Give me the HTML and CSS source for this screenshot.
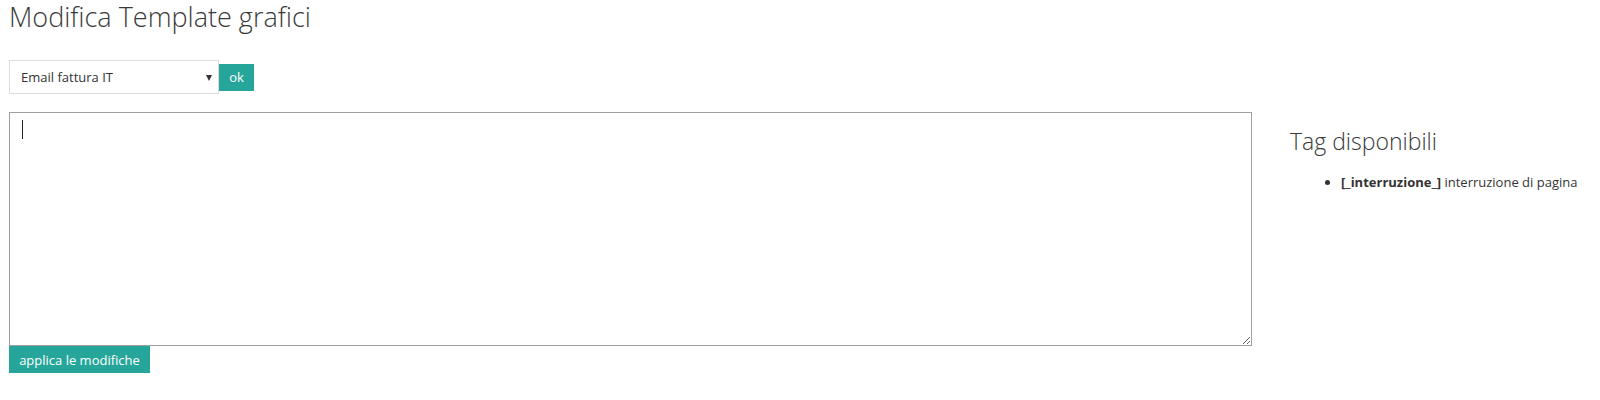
FILE: index.html
```html
<!DOCTYPE html>
<html lang="it">
    <head>
        <meta charset="UTF-8">
        <meta name="viewport" content="width=device-width, initial-scale=1.0">
        <title>Modifica Template grafici</title>
        <link rel="stylesheet" href="styles.css">
    </head>
    <body>
        <div class="page">
            <h1 class="title">Modifica Template grafici</h1>
            <form class="pick">
                <span class="select-wrap">
                    <select id="template">
                        <option>Email fattura IT</option>
                        <option>Email fattura EN</option>
                        <option>Fattura IT</option>
                    </select>
                </span>
                <button type="button" class="btn btn-ok">ok</button>
            </form>
            <div class="main">
                <div class="editor">
                    <span class="caret"></span>
                    <textarea id="body"></textarea>
                    <button type="button" class="btn btn-apply">applica le modifiche</button>
                </div>
                <div class="side">
                    <h3>Tag disponibili</h3>
                    <ul>
                        <li><b>[_interruzione_]</b> interruzione di pagina</li>
                    </ul>
                </div>
            </div>
        </div>
    </body>
</html>
```

FILE: styles.css
```css
body {
    margin: 0;
    font-family: "Open Sans", "Liberation Sans", sans-serif;
    font-size: 13px;
    color: #333333;
    background: #ffffff;
}
.page {
    padding: 0 9px;
}
.title {
    margin: 0;
    font-size: 27px;
    font-weight: 300;
    line-height: 34px;
    color: #3a3a3a;
}
.pick {
    display: flex;
    align-items: center;
    margin-top: 26px;
}
.select-wrap {
    position: relative;
    display: block;
}
.select-wrap::after {
    content: "";
    position: absolute;
    right: 7px;
    top: 15px;
    border-left: 3.5px solid transparent;
    border-right: 3.5px solid transparent;
    border-top: 6px solid #333333;
    pointer-events: none;
}
select {
    appearance: none;
    -webkit-appearance: none;
    width: 210px;
    height: 34px;
    padding: 0 20px 0 11px;
    border: 1px solid #dddddd;
    border-radius: 0;
    background: #ffffff;
    font-family: inherit;
    font-size: 13px;
    color: #333333;
    display: block;
}
.btn {
    border: 0;
    border-radius: 0;
    background-color: #26a69a;
    color: #ffffff;
    font-family: inherit;
    font-size: 13px;
    height: 27px;
    padding: 0 10px;
    cursor: pointer;
}
.btn-ok {
    width: 35px;
    padding: 0;
}
.main {
    display: flex;
    align-items: flex-start;
    margin-top: 18px;
}
.editor {
    position: relative;
    width: 1243px;
    flex: none;
}
/* caret shown in the focused textarea */
.caret {
    position: absolute;
    left: 13px;
    top: 8px;
    width: 1px;
    height: 19px;
    background: #222222;
}
textarea {
    display: block;
    box-sizing: border-box;
    width: 1243px;
    height: 234px;
    margin: 0;
    padding: 7px 12px;
    border: 1px solid #a0a0a0;
    font-family: inherit;
    font-size: 14px;
    line-height: 20px;
    outline: none;
}
.btn-apply {
    width: 141px;
    padding: 0;
    display: block;
}
.side {
    margin-left: 38px;
}
.side h3 {
    margin: 14px 0 0 0;
    font-size: 23px;
    font-weight: 300;
    line-height: 30px;
    color: #3a3a3a;
}
.side ul {
    margin: 16px 0 0 0;
    padding-left: 51px;
}
.side li {
    line-height: 20px;
}
.side b {
    font-weight: 700;
}
```
